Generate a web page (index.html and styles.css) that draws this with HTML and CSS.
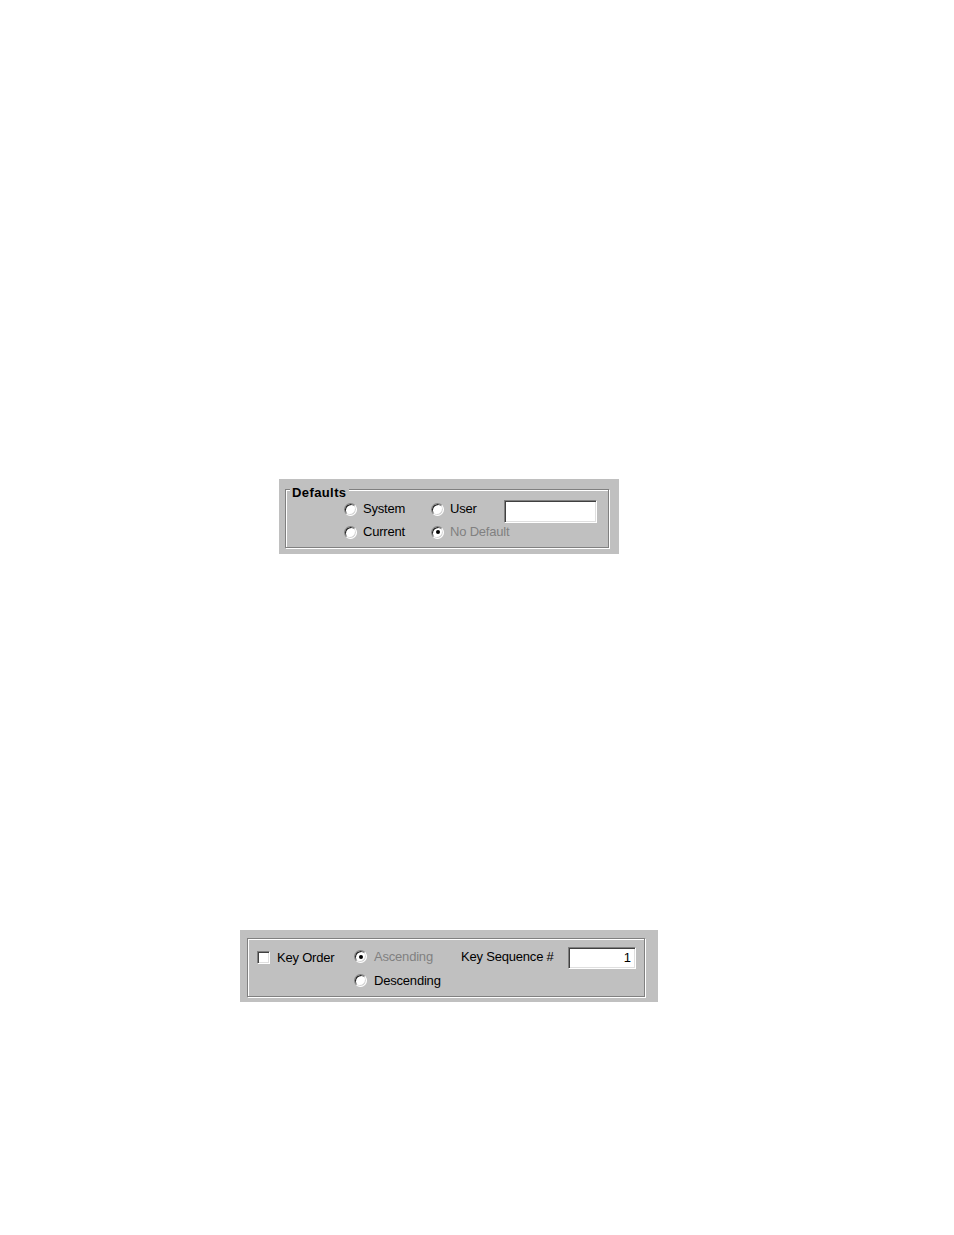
FILE: index.html
```html
<!DOCTYPE html>
<html>
<head>
<meta charset="utf-8">
<link rel="stylesheet" href="styles.css">
</head>
<body>
<div class="page">
  <div class="panel panel-defaults">
    <div class="frame frame-defaults">
      <span class="legend">Defaults</span>
      <label class="opt"><span class="radio"></span><span class="txt">System</span></label>
      <label class="opt"><span class="radio"></span><span class="txt">User</span></label>
      <div class="edit edit-user"></div>
      <label class="opt"><span class="radio"></span><span class="txt">Current</span></label>
      <label class="opt"><span class="radio checked"></span><span class="txt disabled">No Default</span></label>
    </div>
  </div>

  <div class="panel panel-key">
    <div class="frame frame-key">
      <label class="opt opt-check"><span class="check"></span><span class="txt">Key Order</span></label>
      <label class="opt opt-wide"><span class="radio checked"></span><span class="txt disabled">Ascending</span></label>
      <span class="txt seq-label">Key Sequence #</span>
      <div class="edit edit-seq">1</div>
      <label class="opt opt-wide opt-desc"><span class="radio"></span><span class="txt">Descending</span></label>
    </div>
  </div>
</div>
</body>
</html>
```

FILE: styles.css
```css
html, body {
  margin: 0;
  padding: 0;
  background: #ffffff;
}

.page {
  font-family: "Liberation Sans", Arial, sans-serif;
  font-size: 13px;
  color: #000000;
  padding-top: 479px;
}

.panel {
  background: #c0c0c0;
  box-sizing: border-box;
}

.panel-defaults {
  margin-left: 279px;
  width: 340px;
  height: 75px;
  padding: 10px 0 0 6px;
}

.panel-key {
  margin-top: 376px;
  margin-left: 240px;
  width: 418px;
  height: 72px;
  padding: 8px 0 0 7px;
}

.frame {
  position: relative;
  box-sizing: border-box;
  border: 1px solid #808080;
  box-shadow: inset 1px 1px 0 #ffffff, 1px 1px 0 #ffffff;
  display: grid;
}

.frame-defaults {
  width: 324px;
  height: 59px;
  padding: 7px 0 4px 58px;
  grid-template-columns: 87px 73px 93px;
  grid-template-rows: 23px 23px;
}

.frame-key {
  width: 398px;
  height: 59px;
  padding: 5px 0 4px 9px;
  grid-template-columns: 97px 107px 107px 68px;
  grid-template-rows: 24px 24px;
}

.legend {
  position: absolute;
  left: 4px;
  top: -5px;
  padding: 0 2px;
  background: #c0c0c0;
  font-weight: bold;
  letter-spacing: 0.4px;
  line-height: 15px;
}

.opt {
  display: flex;
  align-items: center;
  white-space: nowrap;
}

.opt-wide .txt,
.opt-check .txt {
  margin-left: 7px;
}

.opt-check {
  margin-top: 3px;
}

.frame-defaults .opt .txt {
  margin-left: 6px;
}

.opt-desc {
  grid-column: 2;
  grid-row: 2;
}

.txt {
  line-height: 15px;
  white-space: nowrap;
  letter-spacing: -0.2px;
}

.disabled {
  color: #808080;
}

.seq-label {
  align-self: center;
}

.radio {
  position: relative;
  flex: none;
  box-sizing: border-box;
  width: 13px;
  height: 13px;
  margin-top: 1px;
  border-radius: 50%;
  background: #ffffff;
  border: 1px solid;
  border-color: #808080 #ffffff #ffffff #808080;
  box-shadow: inset 1px 1px 0 #202020, inset -1px -1px 0 #d4d4d4;
}

.radio.checked::after {
  content: "";
  position: absolute;
  left: 3.5px;
  top: 3.5px;
  width: 4px;
  height: 4px;
  border-radius: 50%;
  background: #000000;
}

.check {
  flex: none;
  box-sizing: border-box;
  width: 13px;
  height: 13px;
  background: #ffffff;
  border: 1px solid;
  border-color: #808080 #ffffff #ffffff #808080;
  box-shadow: inset 1px 1px 0 #404040, inset -1px -1px 0 #dfdfdf;
}

.edit {
  box-sizing: border-box;
  align-self: start;
  background: #ffffff;
  border: 1px solid;
  border-color: #808080 #ffffff #ffffff #808080;
  box-shadow: inset 1px 1px 0 #404040, inset -1px -1px 0 #dfdfdf;
}

.edit-user {
  width: 93px;
  height: 23px;
  margin-top: 3px;
}

.edit-seq {
  width: 68px;
  height: 22px;
  margin-top: 3px;
  text-align: right;
  padding-right: 4px;
  line-height: 20px;
}
```
